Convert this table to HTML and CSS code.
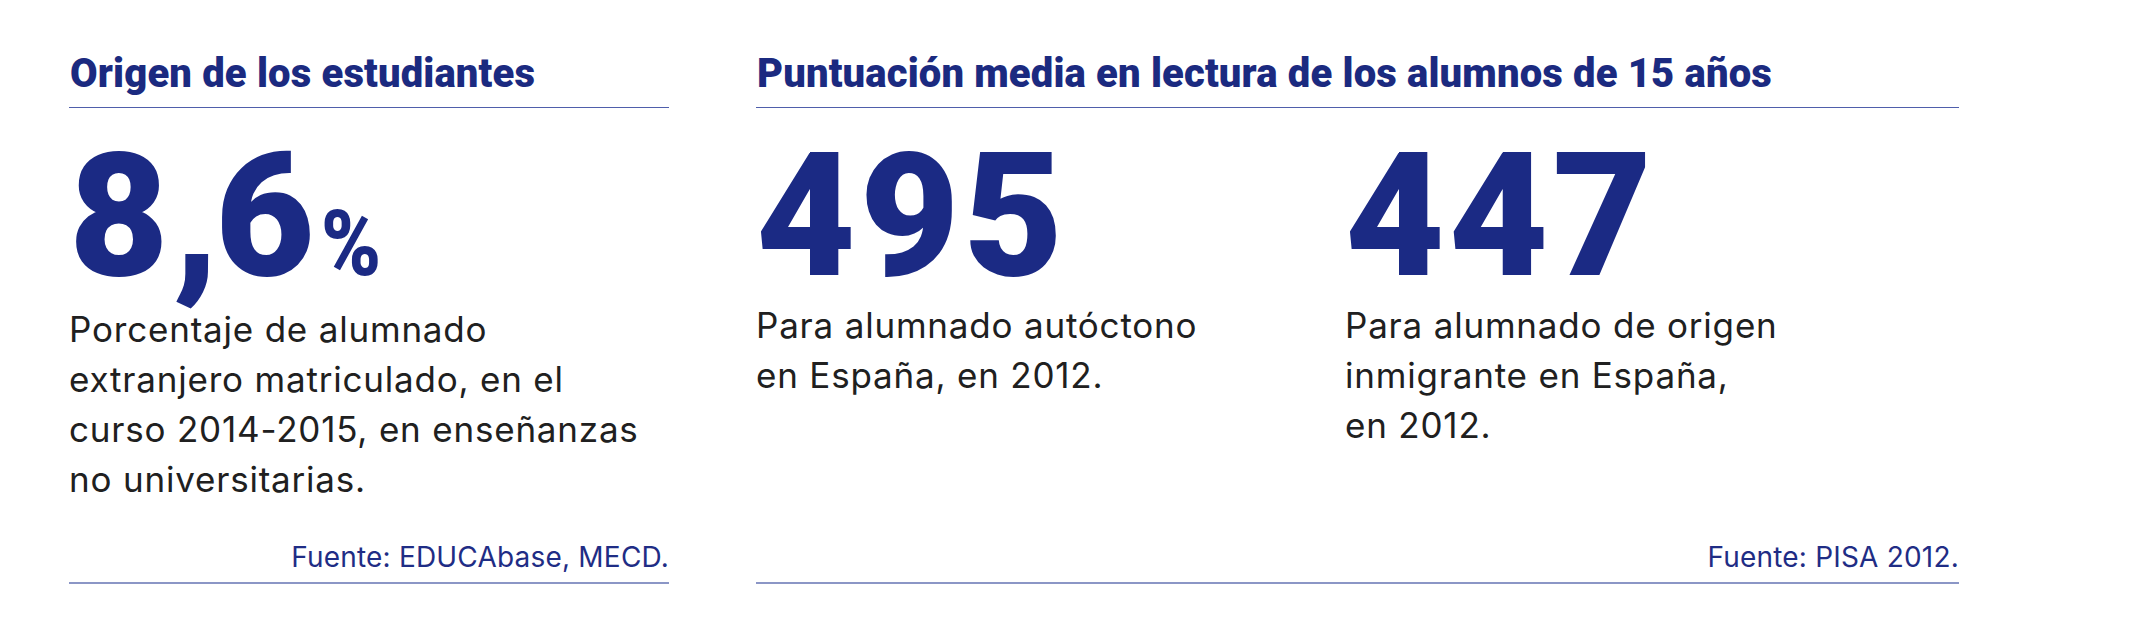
FILE: index.html
```html
<!DOCTYPE html>
<html lang="es">
<head>
<meta charset="utf-8">
<title>Origen de los estudiantes</title>
<link rel="stylesheet" href="styles.css">
</head>
<body>
<main class="page">
  <section class="panel panel-left">
    <h2 class="panel-title">Origen de los estudiantes</h2>
    <div class="stat">
      <div class="stat-value"><span class="digit">8</span><span class="comma">,</span><span class="digit">6</span><span class="pct">%</span></div>
      <p class="stat-text">Porcentaje de alumnado<br>extranjero matriculado, en el<br>curso 2014-2015, en enseñanzas<br>no universitarias.</p>
    </div>
    <p class="source">Fuente: EDUCAbase, MECD.</p>
  </section>
  <section class="panel panel-right">
    <h2 class="panel-title">Puntuación media en lectura de los alumnos de 15 años</h2>
    <div class="stat-grid">
      <div class="stat">
        <div class="stat-value"><span class="digit">4</span><span class="digit">9</span><span class="digit">5</span></div>
        <p class="stat-text">Para alumnado autóctono<br>en España, en 2012.</p>
      </div>
      <div class="stat">
        <div class="stat-value"><span class="digit">4</span><span class="digit">4</span><span class="digit">7</span></div>
        <p class="stat-text">Para alumnado de origen<br>inmigrante en España,<br>en 2012.</p>
      </div>
    </div>
    <p class="source">Fuente: PISA 2012.</p>
  </section>
</main>
</body>
</html>
```

FILE: styles.css
```css
html, body {
  margin: 0;
  padding: 0;
  background: #ffffff;
}

body {
  font-family: Inter, "Liberation Sans", sans-serif;
  color: #222222;
}

.page {
  display: flex;
  align-items: stretch;
  gap: 87px;
  padding: 50px 0 0 69px;
}

.panel {
  display: flex;
  flex-direction: column;
  border-bottom: 2px solid #8b96c6;
}

.panel-left {
  width: 600px;
}

.panel-right {
  width: 1203px;
}

.panel-title {
  margin: 0;
  padding: 0 0 9px 1px;
  font-family: Roboto, "Liberation Sans", sans-serif;
  font-size: 40px;
  line-height: 48px;
  font-weight: 900;
  letter-spacing: 0.15px;
  color: #1b2a80;
  border-bottom: 1px solid #4f5eab;
}

.stat-grid {
  display: grid;
  grid-template-columns: 589px 1fr;
}

.stat {
  display: flex;
  flex-direction: column;
}

.stat-value {
  margin-top: 38px;
  font-family: Roboto, "Liberation Sans", sans-serif;
  font-size: 172px;
  line-height: 140px;
  font-weight: 900;
  letter-spacing: 4px;
  color: #1b2a84;
  white-space: nowrap;
}

.comma {
  letter-spacing: -4px;
}

.pct {
  display: inline-block;
  font-size: 90px;
  line-height: 90px;
  letter-spacing: 0;
  transform: scaleX(0.9);
  transform-origin: left bottom;
  margin-left: 2px;
}

.stat-text {
  margin: 14px 0 0 0;
  font-size: 35px;
  line-height: 50px;
  letter-spacing: 0.8px;
  color: #202020;
}

.source {
  margin: auto 0 0 0;
  padding: 35px 0 7px 0;
  text-align: right;
  font-size: 28px;
  line-height: 36px;
  letter-spacing: 0.2px;
  color: #1f2d85;
}
```
